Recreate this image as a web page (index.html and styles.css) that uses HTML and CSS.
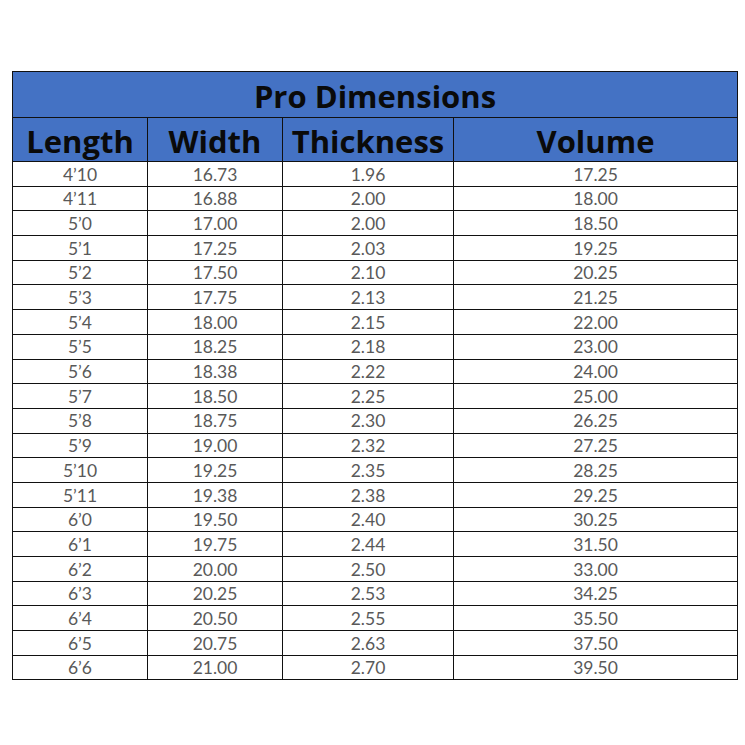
FILE: index.html
```html
<!DOCTYPE html>
<html>
<head>
<meta charset="utf-8">
<link rel="stylesheet" href="styles.css">
</head>
<body>
<div class="page">
<table class="dims">
<colgroup><col class="c1"><col class="c2"><col class="c3"><col class="c4"></colgroup>
<thead>
<tr class="title"><th colspan="4">Pro Dimensions</th></tr>
<tr class="head"><th>Length</th><th>Width</th><th>Thickness</th><th>Volume</th></tr>
</thead>
<tbody>
<tr><td>4’10</td><td>16.73</td><td>1.96</td><td>17.25</td></tr>
<tr><td>4’11</td><td>16.88</td><td>2.00</td><td>18.00</td></tr>
<tr><td>5’0</td><td>17.00</td><td>2.00</td><td>18.50</td></tr>
<tr><td>5’1</td><td>17.25</td><td>2.03</td><td>19.25</td></tr>
<tr><td>5’2</td><td>17.50</td><td>2.10</td><td>20.25</td></tr>
<tr><td>5’3</td><td>17.75</td><td>2.13</td><td>21.25</td></tr>
<tr><td>5’4</td><td>18.00</td><td>2.15</td><td>22.00</td></tr>
<tr><td>5’5</td><td>18.25</td><td>2.18</td><td>23.00</td></tr>
<tr><td>5’6</td><td>18.38</td><td>2.22</td><td>24.00</td></tr>
<tr><td>5’7</td><td>18.50</td><td>2.25</td><td>25.00</td></tr>
<tr><td>5’8</td><td>18.75</td><td>2.30</td><td>26.25</td></tr>
<tr><td>5’9</td><td>19.00</td><td>2.32</td><td>27.25</td></tr>
<tr><td>5’10</td><td>19.25</td><td>2.35</td><td>28.25</td></tr>
<tr><td>5’11</td><td>19.38</td><td>2.38</td><td>29.25</td></tr>
<tr><td>6’0</td><td>19.50</td><td>2.40</td><td>30.25</td></tr>
<tr><td>6’1</td><td>19.75</td><td>2.44</td><td>31.50</td></tr>
<tr><td>6’2</td><td>20.00</td><td>2.50</td><td>33.00</td></tr>
<tr><td>6’3</td><td>20.25</td><td>2.53</td><td>34.25</td></tr>
<tr><td>6’4</td><td>20.50</td><td>2.55</td><td>35.50</td></tr>
<tr><td>6’5</td><td>20.75</td><td>2.63</td><td>37.50</td></tr>
<tr><td>6’6</td><td>21.00</td><td>2.70</td><td>39.50</td></tr>
</tbody>
</table>
</div>
</body>
</html>
```
FILE: styles.css
```css
html, body {
  margin: 0;
  padding: 0;
  background: #ffffff;
}
.page {
  padding: 71px 0 0 12px;
}
.dims {
  border-collapse: collapse;
  table-layout: fixed;
  width: 725px;
  font-family: "Lato", "Open Sans", sans-serif;
}
.c1 { width: 135px; }
.c2 { width: 135px; }
.c3 { width: 171px; }
.c4 { width: 284px; }
.dims th, .dims td {
  border: 1px solid #111111;
  padding: 0;
  text-align: center;
  overflow: hidden;
  white-space: nowrap;
}
.title th {
  background: #4472c4;
  height: 46px;
  font-family: "Open Sans", "Lato", sans-serif;
  font-size: 31px;
  font-weight: 700;
  color: #0a0a0a;
  line-height: 1;
  padding-top: 3px;
  box-sizing: border-box;
}
.head th {
  background: #4472c4;
  height: 44px;
  font-family: "Open Sans", "Lato", sans-serif;
  font-size: 31px;
  font-weight: 700;
  color: #0a0a0a;
  line-height: 1;
  padding-top: 3px;
  box-sizing: border-box;
}
.dims td {
  height: 24.7px;
  font-size: 17.5px;
  color: #595959;
  line-height: 1;
  padding-top: 1px;
  box-sizing: border-box;
}
```
